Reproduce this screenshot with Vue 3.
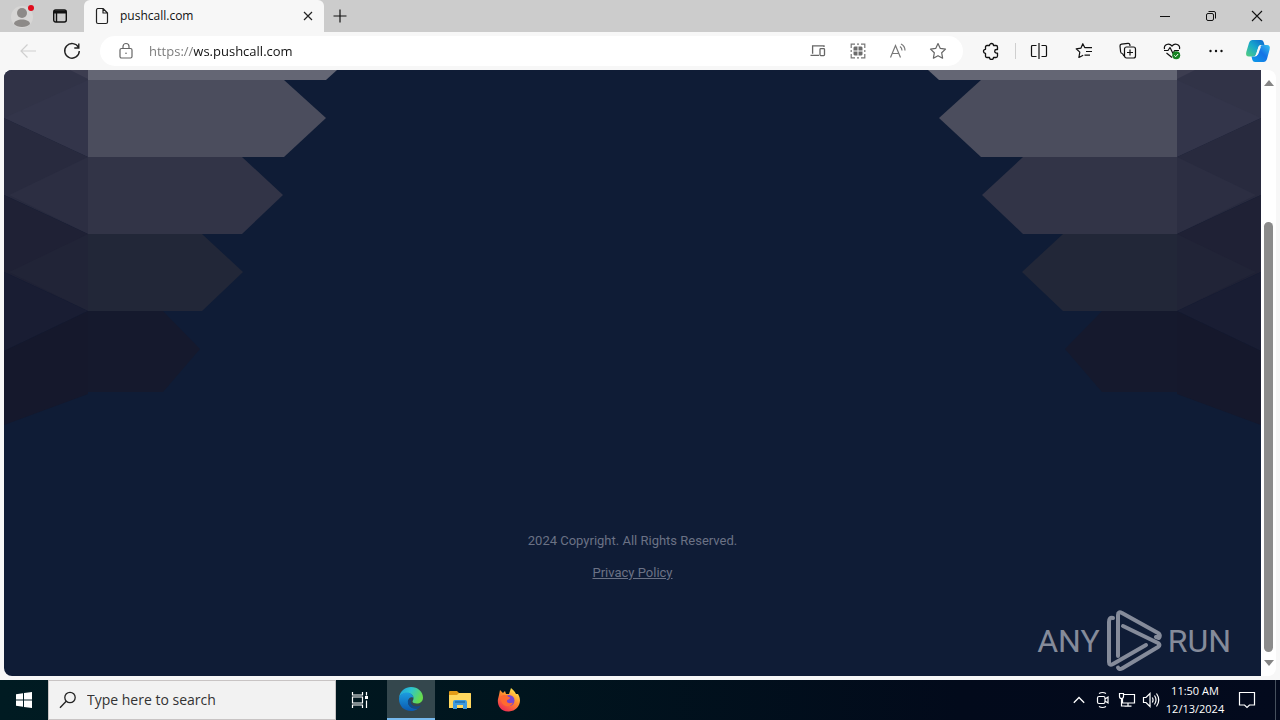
<script setup>
import { ref } from 'vue'

const url = ref('https://ws.pushcall.com')
const query = ref('')
const sides = ['left', 'right']
</script>

<template>
  <div class="desktop">
    <header class="tabs">
      <button class="profile" aria-label="Profile">
        <svg width="26" height="26" viewBox="0 0 26 26">
          <circle cx="13" cy="14" r="11" fill="#d7d6d5" />
          <circle cx="13" cy="10" r="5" fill="#8d8a88" />
          <path d="M5 21c0-6 16-6 16 0-3 4-13 4-16 0z" fill="#8d8a88" />
          <circle cx="22" cy="5" r="3" fill="#e00b1c" />
        </svg>
      </button>
      <button class="workspace" aria-label="Tab actions">
        <svg width="16" height="16" viewBox="0 0 16 16" fill="none" stroke="#111" stroke-width="1.4">
          <rect x="1.7" y="2" width="12.6" height="12" rx="2" />
          <path d="M2 4h12" stroke-width="3" />
          <path d="M4.5 4v10" />
        </svg>
      </button>
      <div class="tab">
        <svg width="16" height="18" viewBox="0 0 16 18" fill="none" stroke="#222" stroke-width="1.2" stroke-linejoin="round">
          <path d="M3.5 1.5H9L13.5 6v9q0 1.500-1.500 1.500H4q-1.500 0-1.500-1.500V3q0-1.500 1.500-1.500zM9 1.500V6h4.500" />
        </svg>
        <span class="title">pushcall.com</span>
        <button class="close" aria-label="Close tab">
          <svg width="10" height="10" viewBox="0 0 10 10" stroke="#222" stroke-width="1.2"><path d="M1 1l8 8M9 1L1 9" /></svg>
        </button>
      </div>
      <button class="new" aria-label="New tab">
        <svg width="14" height="14" viewBox="0 0 14 14" stroke="#111" stroke-width="1.2"><path d="M7 .5v13M.5 7h13" /></svg>
      </button>
      <div class="caption">
        <button aria-label="Minimize"><svg width="12" height="12" viewBox="0 0 12 12" stroke="#111"><path d="M1 6.500h10" /></svg></button>
        <button aria-label="Restore">
          <svg width="12" height="12" viewBox="0 0 12 12" fill="none" stroke="#111">
            <rect x="1.500" y="3.500" width="7" height="7" rx="1.500" />
            <path d="M3.500 1.500H9q1.500 0 1.500 1.500v5.500" />
          </svg>
        </button>
        <button aria-label="Close"><svg width="12" height="12" viewBox="0 0 12 12" stroke="#111" stroke-width="1.1"><path d="M1 1l10 10M11 1L1 11" /></svg></button>
      </div>
    </header>

    <nav class="toolbar">
      <button class="back" aria-label="Back" disabled>
        <svg width="18" height="16" viewBox="0 0 18 16" fill="none" stroke="#cfcfcf" stroke-width="1.2"><path d="M8.500 1.500L2 8l6.500 6.500M2 8h15" /></svg>
      </button>
      <button class="reload" aria-label="Refresh">
        <svg width="18" height="18" viewBox="0 0 18 18" fill="none" stroke="#222" stroke-width="1.400"><path d="M15.500 5.500A7.300 7.300 0 1 0 16.300 9M15.800 1.500v4.500h-4.500" /></svg>
      </button>
      <div class="address">
        <button aria-label="Site information">
          <svg width="16" height="18" viewBox="0 0 16 18" fill="none" stroke="#666" stroke-width="1.200">
            <rect x="2" y="6.500" width="12" height="9.500" rx="1.500" />
            <path d="M5 6.500V4.500a3 3 0 0 1 6 0v2" /><circle cx="8" cy="11.300" r=".8" fill="#666" stroke="none" />
          </svg>
        </button>
        <input v-model="url" class="url" type="text" aria-label="Address" spellcheck="false" />
        <button aria-label="Send to device">
          <svg width="16" height="14" viewBox="0 0 16 14" fill="none" stroke="#666" stroke-width="1.300">
            <path d="M14 3V1.800H2.600v8M.5 11.400h8.500" /><rect x="10" y="4.600" width="4.500" height="7" rx=".8" />
          </svg>
        </button>
        <button aria-label="QR code">
          <svg width="16" height="16" viewBox="0 0 16 16" fill="none" stroke="#777" stroke-width="1.200">
            <path d="M1.200 5V1.200h3.800M7 1.200h2M11 1.200h3.800v3.800M14.800 7v2M14.800 11v3.800h-3.800M9 14.800h-2M5 14.800H1.200v-3.800M1.200 9v-2" />
            <path d="M4.500 3.500h3v4h-4v-3zM8.500 3.500h3l1 1v3h-4zM3.500 8.500h4v4h-3l-1-1zM8.500 8.500h4v3l-1 1h-3z" fill="#6c6c6c" stroke="none" />
          </svg>
        </button>
        <button aria-label="Read aloud">
          <svg width="18" height="16" viewBox="0 0 18 16" fill="none" stroke="#777" stroke-width="1.200">
            <path d="M1.500 14.500L6.500 2.500l5 12M3.300 10.500h6.500M11 3.500q2 1.400 2 4M12 1q4 2 4 6.500" />
          </svg>
        </button>
        <button aria-label="Add to favorites">
          <svg width="18" height="18" viewBox="0 0 18 18" fill="none" stroke="#666" stroke-width="1.200" stroke-linejoin="round">
            <path d="M9 1.500l2.300 4.900 5.200.7-3.800 3.700.9 5.400L9 13.700l-4.600 2.500.9-5.400L1.500 7.100l5.200-.7z" />
          </svg>
        </button>
      </div>
      <div class="actions">
        <button class="ext" aria-label="Extensions">
          <svg width="18" height="18" viewBox="0 0 18 18" fill="none" stroke="#111" stroke-width="1.300" stroke-linejoin="round">
            <path d="M5 3.500h2.500a2 2 0 0 1 4 0H14q1.500 0 1.500 1.500v2.500h-1a1.800 1.800 0 0 0 0 3.600h1V14q0 1.500-1.500 1.500h-2.500a2 2 0 0 1-4 0H5q-1.500 0-1.500-1.500v-2.700a2 2 0 0 1 0-4V5q0-1.500 1.500-1.500z" />
          </svg>
        </button>
        <span class="divider"></span>
        <button aria-label="Split screen">
          <svg width="18" height="18" viewBox="0 0 18 18" fill="none" stroke="#111" stroke-width="1.200">
            <path d="M9 1v16M6.500 3.500h-4q-1 0-1 1v9q0 1 1 1h4M11.500 3.500h4q1 0 1 1v9q0 1-1 1h-4" />
          </svg>
        </button>
        <button aria-label="Favorites">
          <svg width="18" height="18" viewBox="0 0 18 18" fill="none" stroke="#111" stroke-width="1.200" stroke-linejoin="round">
            <path d="M11 5.600H9.700L7.800 1.700 6 6.100l-4.800.7 3.600 3.300L3.900 15.500l4.300-2.200M11 5.600h6M11 9.500h6M9.500 13.200H15" />
          </svg>
        </button>
        <button aria-label="Collections">
          <svg width="18" height="18" viewBox="0 0 18 18" fill="none" stroke="#111" stroke-width="1.200">
            <path d="M3.500 11.500Q1.800 11.500 1.600 9.800L1 4q-.1-1.600 1.500-1.900L9 1.300q1.500-.2 1.800 1.200L11 4M3.500 11.500q1 2.500 2.500 3" />
            <rect x="5.500" y="5" width="11" height="11" rx="2" /><path d="M11 7.500v6M8 10.500h6" />
          </svg>
        </button>
        <button aria-label="Browser essentials">
          <svg width="18" height="18" viewBox="0 0 18 18" fill="none" stroke="#111" stroke-width="1.200" stroke-linejoin="round">
            <path d="M1.500 7.200C.5 2.500 6 .5 9 4c3-3.500 8.500-1.500 7.500 3.200M1 8.500h4l2-3 3 6 1.600-3H16M3.500 11L9 15.500" />
            <circle cx="13.200" cy="13.200" r="4" fill="#168323" stroke="none" />
            <path d="M11.300 13.400l1.400 1.300 2.400-2.700" stroke="#fff" stroke-width="1" />
          </svg>
        </button>
        <button aria-label="Settings and more">
          <svg width="18" height="18" viewBox="0 0 18 18" fill="#111"><circle cx="3.500" cy="9" r="1.200" /><circle cx="9" cy="9" r="1.200" /><circle cx="14.500" cy="9" r="1.200" /></svg>
        </button>
        <button class="copilot" aria-label="Copilot">
          <svg width="26" height="24" viewBox="0 0 26 24">
            <defs>
              <linearGradient id="cpA" x1="0" y1="1" x2="1" y2="0"><stop offset="0" stop-color="#55cf7c" /><stop offset=".5" stop-color="#18a9cb" /><stop offset="1" stop-color="#0b62d0" /></linearGradient>
              <linearGradient id="cpB" x1="0" y1="1" x2="1" y2="0"><stop offset="0" stop-color="#0b9ce8" /><stop offset=".55" stop-color="#1673e6" /><stop offset="1" stop-color="#35c3ef" /></linearGradient>
            </defs>
            <path d="M7.500 1h8.500q2 0 2.600 2l.9 3h-4q-1.500 0-2.200 2.200l-2.200 7Q10.400 17.500 8 17.500H4Q.2 17.500 1.300 13L4 4Q5 1 7.500 1z" fill="url(#cpA)" />
            <path d="M18.500 23H10q-2 0-2.600-2l-.9-3.500H10q2 0 2.700-2.300l2.200-7Q15.600 6 18 6h4q3.700 0 2.600 4.500L22 20q-1 3-3.500 3z" fill="url(#cpB)" />
            <path d="M13.700 7.500h2.300l-2.700 7.500q-.8 1.800-3.300 1.800.9-.6 1.300-2z" fill="#f7f7f7" />
          </svg>
        </button>
      </div>
    </nav>

    <div class="viewport">
      <main class="page">
        <svg v-for="side in sides" :key="side" :class="['art', side]" width="340" height="360" viewBox="0 0 340 360" aria-hidden="true">
          <path d="M0 0h84v87L0 48z" fill="#313347" />
          <path d="M84 10L0 48l84 39z" fill="#33354a" />
          <path d="M66 0h18v9z" fill="#3c3d50" />
          <path d="M0 48l84 39v77L0 125z" fill="#282a3e" />
          <path d="M84 87L5 125l79 39z" fill="#2c2e42" />
          <path d="M0 125l84 39v77L0 202z" fill="#1f2135" />
          <path d="M84 164L5 202l79 39z" fill="#212437" />
          <path d="M0 202l84 39-84 40z" fill="#191d33" />
          <path d="M0 281l84-40v83L0 355z" fill="#15182c" />
          <path d="M84 0h249l-11 10H84z" fill="#646674" />
          <path d="M84 10h196l42 38-42 39H84z" fill="#4b4d5d" />
          <path d="M84 87h154l41 38-41 39H84z" fill="#323447" />
          <path d="M84 164h114l41 38-41 39H84z" fill="#222738" />
          <path d="M84 241h75l37 38-37 43H84z" fill="#15192d" />
        </svg>
        <footer class="legal">
          <p>2024 Copyright. All Rights Reserved.</p>
          <p><a href="#">Privacy Policy</a></p>
        </footer>
        <div class="watermark">
          <span>ANY</span>
          <svg width="56" height="62" viewBox="0 0 56 62" fill="none" stroke="#858b9a" stroke-width="4" stroke-linejoin="round" stroke-linecap="round">
            <path d="M7 8Q3 7 3 12v40q0 4 4 2L40 35" />
            <path d="M12 46V5q0-4 4-2l36 20q3 2 1 5l-3-1" />
            <path d="M17 16L52 33q3 2 0 4L16 58.500q-3 1.500-4-1" />
          </svg>
          <span>RUN</span>
        </div>
      </main>
      <div class="scroll" aria-hidden="true">
        <svg width="10" height="6" viewBox="0 0 10 6" fill="#858585"><path d="M5 0l5 6H0z" /></svg>
        <div class="track"><div class="thumb"></div></div>
        <svg width="10" height="6" viewBox="0 0 10 6" fill="#858585"><path d="M5 6L0 0h10z" /></svg>
      </div>
    </div>

    <footer class="taskbar">
      <button class="app" aria-label="Start">
        <svg width="16" height="16" viewBox="0 0 16 16" fill="#fff"><path d="M0 2.300l7-1v6.200H0zM8 1.100L16 0v7.500H8zM0 8.500h7v6.200l-7-1zM8 8.500h8V16l-8-1.100z" /></svg>
      </button>
      <label class="search">
        <svg width="18" height="18" viewBox="0 0 18 18" fill="none" stroke="#222" stroke-width="1.300"><circle cx="11" cy="6.500" r="5.200" /><path d="M7.200 10.300L1 16.800" /></svg>
        <input v-model="query" type="text" placeholder="Type here to search" aria-label="Search" />
      </label>
      <button class="app" aria-label="Task view">
        <svg width="18" height="18" viewBox="0 0 18 18" fill="none" stroke="#fff" stroke-width="1.200"><path d="M1.500 1v3h10V1M1.500 17v-3h10v3M1.500 6h10v6h-10zM15.500 1v3.500M15.500 9.500V17" /><path d="M14 5h3v3h-3z" fill="#fff" stroke="none" /></svg>
      </button>
      <button class="app active" aria-label="Microsoft Edge">
        <svg width="26" height="26" viewBox="0 0 26 26">
          <defs>
            <linearGradient id="edA" x1="0" y1="0" x2="1" y2=".4"><stop offset="0" stop-color="#1e9bdd" /><stop offset=".5" stop-color="#2dc5cf" /><stop offset="1" stop-color="#66db4e" /></linearGradient>
            <linearGradient id="edB" x1="0" y1="0" x2="0" y2="1"><stop offset="0" stop-color="#1c9de0" /><stop offset="1" stop-color="#0b59b0" /></linearGradient>
          </defs>
          <path d="M1 12C2 4.500 7.500 1 13 1c7 0 12 5 12 10.500 0 4-3 6-6.200 6-2.500 0-4.300-1-4.300-2 0-.8 1-1.200 1-3C15.500 8.500 12 7 9 7c-4 0-7 2.500-8 5z" fill="url(#edA)" />
          <path d="M1 13c0-4 4-6.500 8-6.500 3.500 0 6.500 2.500 6.500 5.500-1-1.500-5.500-.5-5.500 4 0 5 5 7.500 10 6.500-2 2-5 2.500-7 2.500C6 25 1 20 1 13z" fill="url(#edB)" />
          <path d="M10 14c-1 5 3 9.500 10.500 8.500l3-3.500c-4 2.500-9 1.500-10.500-1.500-.8-1.500-.5-3 .5-4z" fill="#114a8b" />
        </svg>
      </button>
      <button class="app" aria-label="File Explorer">
        <svg width="22" height="20" viewBox="0 0 22 20">
          <path d="M0 2q0-1 1-1h7l2 2h11q1 0 1 1v4H0z" fill="#e39b17" />
          <path d="M0 5h8l2-2h11q1 0 1 1v14H0z" fill="#ffd75e" />
          <path d="M4 19v-7q0-2 2-2h10q2 0 2 2v7h-4v-4H8v4z" fill="#3e9ade" /><path d="M6 12h10" stroke="#2479bb" stroke-width="2" />
        </svg>
      </button>
      <button class="app" aria-label="Firefox">
        <svg width="24" height="24" viewBox="0 0 24 24">
          <defs><linearGradient id="ff" x1=".8" y1="0" x2=".2" y2="1"><stop offset="0" stop-color="#fff14f" /><stop offset=".45" stop-color="#ff8b2d" /><stop offset="1" stop-color="#ed2456" /></linearGradient></defs>
          <path d="M2 7l1-5 3 3 2-2 1 3h3l2-6c3 3 4 3.500 5 6l2 0c5 8 0 17-9 17.500C3 24 0 16 1 11z" fill="url(#ff)" />
          <circle cx="12" cy="12.500" r="5.500" fill="#7647d1" />
          <path d="M3 9c3-3 7-2.500 8.500 0 2 0 2 1.500 0 2.500-2 .5-2 2-1 3 2 1.500 4 .2 5.500 0-1 3-4 4.500-7 3.500C5 17 4 13 3 9z" fill="#ff6a30" />
        </svg>
      </button>
      <div class="tray">
        <button aria-label="Show hidden icons"><svg width="12" height="8" viewBox="0 0 12 8" fill="none" stroke="#fff" stroke-width="1.300"><path d="M.8 6.800L6 1.500l5.200 5.300" /></svg></button>
        <button aria-label="Meet Now"><svg width="14" height="18" viewBox="0 0 14 18" fill="none" stroke="#fff" stroke-width="1.200"><rect x="1.500" y="5.500" width="7.500" height="7" rx="1.500" /><path d="M9 8l3-2v6L9 10M3 2.500q3.500-2 7 0M3 15.500q3.500 2 7 0" /></svg></button>
        <button aria-label="Network"><svg width="18" height="16" viewBox="0 0 18 16" fill="none" stroke="#fff" stroke-width="1.200"><path d="M6 2.500h10.500v8.500H4.500V7M10 11v3M6.500 14.200h7M1.500 1.500h4v3q0 2-2 2t-2-2zM3.500 6.500v7.500h4" /></svg></button>
        <button aria-label="Volume"><svg width="18" height="16" viewBox="0 0 18 16" fill="none" stroke="#fff" stroke-width="1.200"><path d="M1.500 5.500H4l4-4v13l-4-4H1.500zM10.300 5.500q1.500 2.500 0 5M12.500 3.500q3 4.500 0 9M14.500 1.500q4.500 6.500 0 13" /></svg></button>
        <div class="clock"><time>11:50 AM</time><time>12/13/2024</time></div>
        <button class="notes" aria-label="Notifications"><svg width="18" height="18" viewBox="0 0 18 18" fill="none" stroke="#fff" stroke-width="1.200"><path d="M1.500 1.500h15v12.500h-5L9 16.500 6.500 14h-5z" /></svg></button>
      </div>
    </footer>
  </div>
</template>

<style>
body { margin: 0; }
</style>

<style scoped>
.desktop {
  display: flex;
  flex-direction: column;
  min-height: 100vh;
  background: #f7f7f7;
  font-family: "Open Sans", "Noto Sans", sans-serif;
  color: #111;
}
button {
  display: flex;
  align-items: center;
  justify-content: center;
  padding: 0;
  border: 0;
  background: none;
  font: inherit;
  color: inherit;
}
svg { display: block; flex: none; }
input { font: inherit; border: 0; padding: 0; outline: 0; background: none; min-width: 0; }
.tabs { display: flex; height: 32px; background: #cccccc; }
.profile { width: 44px; }
.workspace { width: 32px; margin-right: 8px; }
.tab {
  display: flex;
  align-items: center;
  width: 230px;
  gap: 10px;
  padding: 0 0 0 10px;
  background: #f7f7f7;
  border-radius: 6px 6px 0 0;
}
.title { flex: 1; font-size: 12px; line-height: 16px; }
.close { width: 32px; height: 32px; }
.new { width: 32px; }
.caption { display: flex; margin-left: auto; }
.caption button { width: 46px; }
.toolbar { display: flex; align-items: center; height: 38px; background: #f7f7f7; }
.back { width: 56px; }
.reload { width: 32px; margin-right: 12px; }
.address {
  display: flex;
  align-items: center;
  flex: 1;
  height: 30px;
  padding: 0 5px 0 6px;
  border-radius: 15px;
  background: #fff;
}
.address button { width: 40px; height: 30px; }
.url {
  flex: 1;
  margin-left: 3px;
  height: 24px;
  font-size: 13px;
  color: transparent;
  background: linear-gradient(90deg, #777 0 45px, #111 45px);
  background-clip: text;
}
.actions { display: flex; align-items: center; padding-right: 2px; }
.actions button { width: 44px; height: 36px; }
.actions .ext { width: 48px; margin-left: 4px; }
.divider { width: 1px; height: 16px; background: #cfcfcf; }
.actions .divider + button { width: 46px; }
.actions .copilot { width: 40px; }
.viewport { display: flex; flex: 1; padding: 0 4px 4px; }
.page {
  position: relative;
  display: flex;
  flex: 1;
  flex-direction: column;
  justify-content: flex-end;
  overflow: hidden;
  border-radius: 8px 0 0 8px;
  background: #0f1c36;
}
.art { position: absolute; top: 0; }
.left { left: 0; }
.right { right: 0; transform: scaleX(-1); }
.legal {
  display: flex;
  flex-direction: column;
  gap: 12px;
  text-align: center;
  font-family: Roboto, "Liberation Sans", sans-serif;
  font-size: 13px;
  line-height: 20px;
  color: #6b7285;
}
.legal p { margin: 0; }
.legal a { color: inherit; }
.watermark {
  display: flex;
  align-items: center;
  justify-content: flex-end;
  gap: 6px;
  margin: 27px 30px 4px;
  font-family: Roboto, "Liberation Sans", sans-serif;
  font-size: 32px;
  line-height: 62px;
  color: #858b9a;
}
.scroll {
  display: flex;
  flex-direction: column;
  align-items: center;
  gap: 8px;
  width: 15px;
  padding: 10px 0;
  border-radius: 0 8px 8px 0;
  background: #fff;
}
.track { display: flex; flex: 1; align-items: flex-end; }
.thumb { width: 9px; height: 77%; border-radius: 5px; background: #8b8b8b; }
.taskbar {
  display: flex;
  height: 40px;
  background: linear-gradient(90deg, #001b22, #00151e 40%, #020a1b 75%, #030a1d);
  color: #fff;
}
.app { width: 48px; margin-right: 1px; }
.app:first-child { margin-right: 0; }
.search + .app { margin-right: 3px; }
.active { background: #34474d; border-bottom: 2px solid #76b9ed; }
.search {
  display: flex;
  align-items: center;
  gap: 10px;
  box-sizing: border-box;
  width: 288px;
  padding: 0 10px;
  border: 1px solid #c8c4c4;
  background: #f2f2f2;
}
.search input { flex: 1; font-size: 14px; line-height: 20px; }
.search input::placeholder { color: #333; opacity: 1; }
.tray { display: flex; align-items: center; margin-left: auto; padding-right: 8px; border-right: 1px solid #46505d; margin-right: 4px; }
.tray button { width: 24px; height: 40px; }
.clock { display: flex; flex-direction: column; width: 64px; text-align: center; font-size: 11px; line-height: 18px; }
.tray .notes { width: 40px; }
</style>
